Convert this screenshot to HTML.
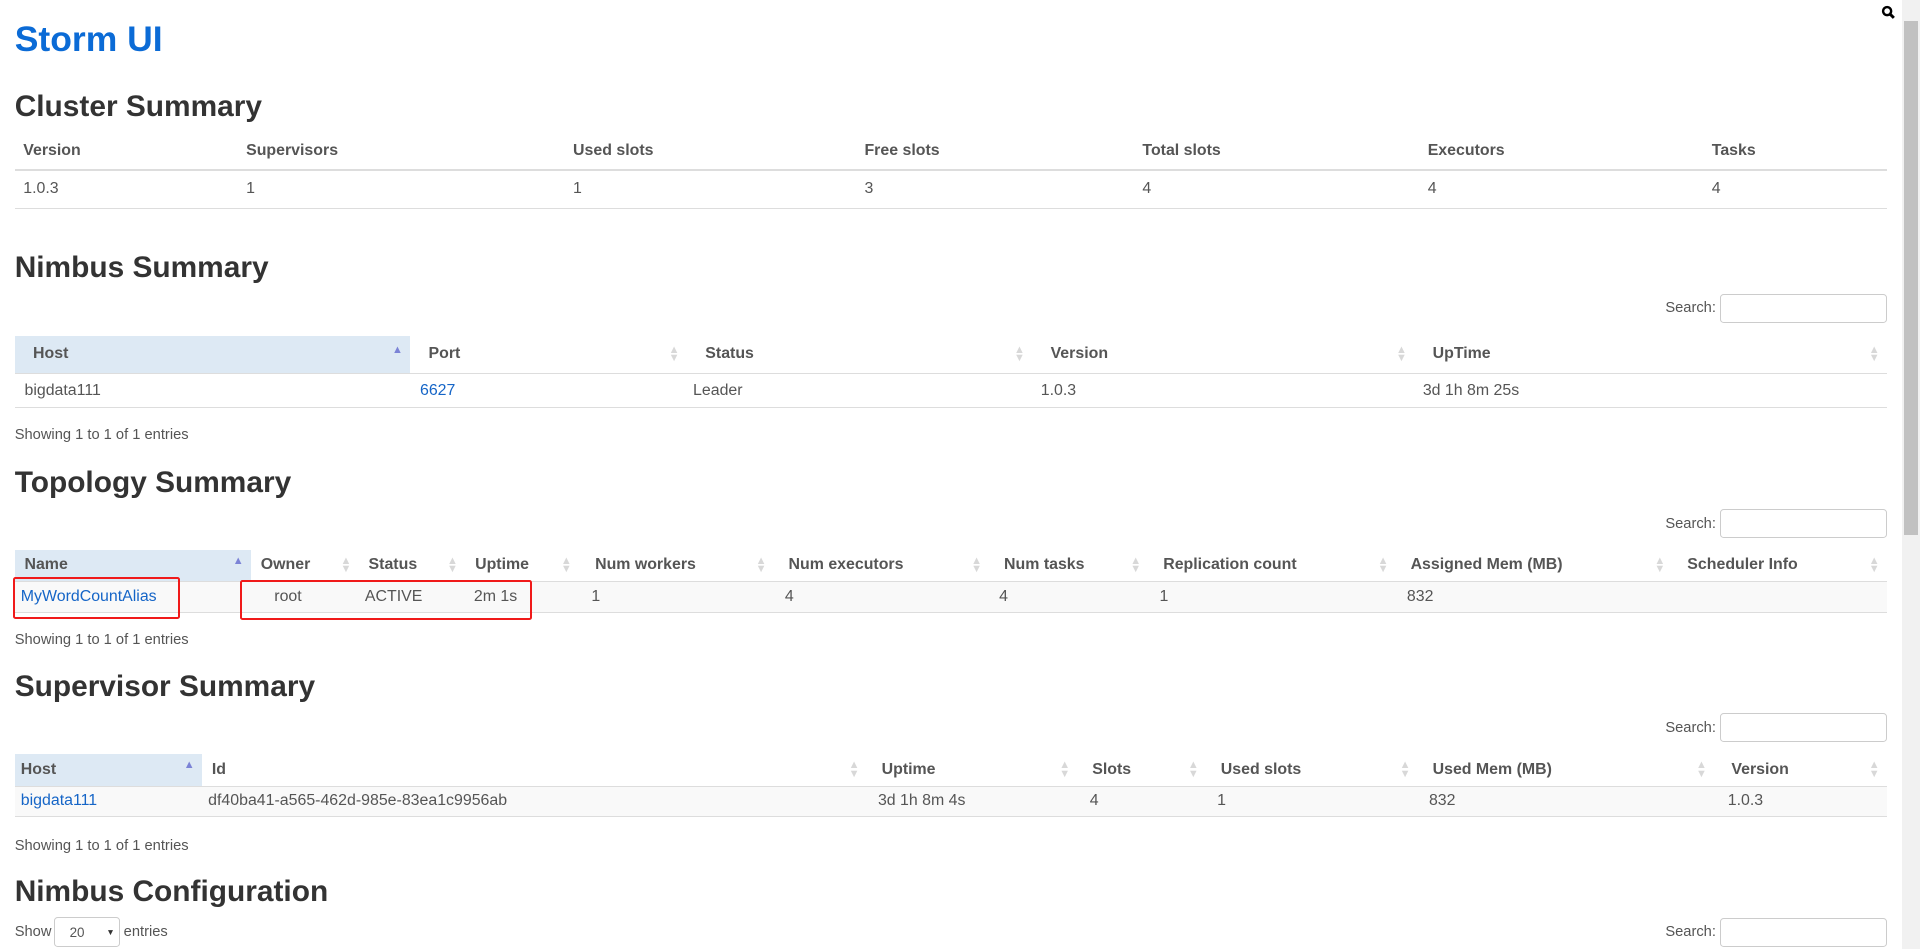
<!DOCTYPE html>
<html><head><meta charset="utf-8"><style>
html,body{margin:0;padding:0;background:#fff;overflow:hidden}
#w{zoom:1.2245;width:1568px;height:775px;position:relative;font-family:"Liberation Sans",Arial,sans-serif;font-size:13px;color:#555}
.a{position:absolute}
h1{position:absolute;left:12px;margin:0;font-size:29px;color:#0b6bd6;font-weight:bold;line-height:30px}
h2{position:absolute;left:12px;margin:0;font-size:24.4px;color:#333;font-weight:bold;line-height:26px}
table{position:absolute;left:12px;width:1529px;border-collapse:collapse;table-layout:fixed}
th{text-align:left;font-weight:bold;color:#555;padding:0 0 0 15px;position:relative;border-bottom:1px solid #ddd}
td{padding:0 0 0 8px;white-space:nowrap;border-bottom:1px solid #ddd}
th.s{background:#dde9f4}
th .i{position:absolute;right:6px;top:50%;margin-top:-7px;font-size:9px;line-height:7px;color:#d8d8d8}
th.s .i{color:#7b83d6}
a{color:#1565c7;text-decoration:none}
.sh{font-size:12px;position:absolute;left:12px}
.sl{position:absolute;left:1360px;font-size:12px}
.sb{position:absolute;left:1405px;width:134px;height:22px;border:1px solid #ccc;border-radius:3px}
.rb{position:absolute;border:2px solid #f01a1a;border-radius:2px}
tr.st td{background:#f9f9f9}
</style></head><body><div id="w">
<h1 style="top:17px">Storm UI</h1>
<svg class="a" style="left:1536px;top:4px" width="12" height="12" viewBox="0 0 12 12"><circle cx="5" cy="5" r="3.3" fill="none" stroke="#000" stroke-width="2"/><path d="M7.3 7.3L10.5 10.5" stroke="#000" stroke-width="2.4"/></svg>
<div class="a" style="left:1553px;top:0;width:15px;height:775px;background:#f1f1f1"></div>
<div class="a" style="left:1555px;top:17px;width:11px;height:420px;background:#c1c1c1"></div>

<h2 style="top:74px">Cluster Summary</h2>
<table style="top:108px"><colgroup><col style="width:181px"><col style="width:267px"><col style="width:238px"><col style="width:227px"><col style="width:233px"><col style="width:232px"><col></colgroup>
<tr style="height:31px"><th style="padding-left:7px;border-bottom:2px solid #ddd">Version</th><th style="padding-left:8px;border-bottom:2px solid #ddd">Supervisors</th><th style="padding-left:8px;border-bottom:2px solid #ddd">Used slots</th><th style="padding-left:8px;border-bottom:2px solid #ddd">Free slots</th><th style="padding-left:8px;border-bottom:2px solid #ddd">Total slots</th><th style="padding-left:8px;border-bottom:2px solid #ddd">Executors</th><th style="padding-left:8px;border-bottom:2px solid #ddd">Tasks</th></tr>
<tr style="height:31px"><td style="padding-left:7px">1.0.3</td><td>1</td><td>1</td><td>3</td><td>4</td><td>4</td><td>4</td></tr></table>

<h2 style="top:206px">Nimbus Summary</h2>
<div class="sl" style="top:245px">Search:</div><div class="sb" style="top:240px"></div>
<table style="top:274px"><colgroup><col style="width:323px"><col style="width:226px"><col style="width:282px"><col style="width:312px"><col></colgroup>
<tr style="height:31px"><th class="s">Host<span class="i">▲</span></th><th>Port<span class="i">▲<br>▼</span></th><th>Status<span class="i">▲<br>▼</span></th><th>Version<span class="i">▲<br>▼</span></th><th>UpTime<span class="i">▲<br>▼</span></th></tr>
<tr style="height:28px"><td>bigdata111</td><td><a>6627</a></td><td style="padding-left:5px">Leader</td><td style="padding-left:7px">1.0.3</td><td style="padding-left:7px">3d 1h 8m 25s</td></tr></table>
<div class="sh" style="top:349px">Showing 1 to 1 of 1 entries</div>

<h2 style="top:381px">Topology Summary</h2>
<div class="sl" style="top:421px">Search:</div><div class="sb" style="top:416px"></div>
<table style="top:449px"><colgroup><col style="width:193px"><col style="width:88px"><col style="width:87px"><col style="width:93px"><col style="width:159px"><col style="width:176px"><col style="width:130px"><col style="width:202px"><col style="width:226px"><col></colgroup>
<tr style="height:26px"><th class="s" style="padding-left:8px">Name<span class="i">▲</span></th><th style="padding-left:8px">Owner<span class="i">▲<br>▼</span></th><th style="padding-left:8px">Status<span class="i">▲<br>▼</span></th><th style="padding-left:8px">Uptime<span class="i">▲<br>▼</span></th><th style="padding-left:13px">Num workers<span class="i">▲<br>▼</span></th><th style="padding-left:12px">Num executors<span class="i">▲<br>▼</span></th><th style="padding-left:12px">Num tasks<span class="i">▲<br>▼</span></th><th style="padding-left:12px">Replication count<span class="i">▲<br>▼</span></th><th style="padding-left:12px">Assigned Mem (MB)<span class="i">▲<br>▼</span></th><th style="padding-left:12px">Scheduler Info<span class="i">▲<br>▼</span></th></tr>
<tr class="st" style="height:25px"><td style="padding-left:5px"><a>MyWordCountAlias</a></td><td style="padding-left:19px">root</td><td style="padding-left:5px">ACTIVE</td><td style="padding-left:7px">2m 1s</td><td style="padding-left:10px">1</td><td style="padding-left:9px">4</td><td style="padding-left:8px">4</td><td style="padding-left:9px">1</td><td style="padding-left:9px">832</td><td></td></tr></table>
<div class="rb" style="left:11px;top:471px;width:133px;height:31px"></div>
<div class="rb" style="left:196px;top:474px;width:235px;height:29px"></div>
<div class="sh" style="top:516px">Showing 1 to 1 of 1 entries</div>

<h2 style="top:548px">Supervisor Summary</h2>
<div class="sl" style="top:588px">Search:</div><div class="sb" style="top:582px"></div>
<table style="top:616px"><colgroup><col style="width:153px"><col style="width:543px"><col style="width:172px"><col style="width:105px"><col style="width:173px"><col style="width:242px"><col></colgroup>
<tr style="height:26px"><th class="s" style="padding-left:5px">Host<span class="i">▲</span></th><th style="padding-left:8px">Id<span class="i">▲<br>▼</span></th><th style="padding-left:12px">Uptime<span class="i">▲<br>▼</span></th><th style="padding-left:12px">Slots<span class="i">▲<br>▼</span></th><th style="padding-left:12px">Used slots<span class="i">▲<br>▼</span></th><th style="padding-left:12px">Used Mem (MB)<span class="i">▲<br>▼</span></th><th style="padding-left:14px">Version<span class="i">▲<br>▼</span></th></tr>
<tr class="st" style="height:25px"><td style="padding-left:5px"><a>bigdata111</a></td><td style="padding-left:5px">df40ba41-a565-462d-985e-83ea1c9956ab</td><td style="padding-left:9px">3d 1h 8m 4s</td><td style="padding-left:10px">4</td><td style="padding-left:9px">1</td><td style="padding-left:9px">832</td><td style="padding-left:11px">1.0.3</td></tr></table>
<div class="sh" style="top:684px">Showing 1 to 1 of 1 entries</div>

<h2 style="top:715px">Nimbus Configuration</h2>
<div class="a" style="left:12px;top:755px;font-size:12px">Show</div>
<div class="a" style="left:44px;top:749px;width:52px;height:23px;border:1px solid #ccc;border-radius:3px;font-size:11px"><span style="position:absolute;left:12px;top:6px">20</span><span style="position:absolute;left:42px;top:7px;font-size:7px;color:#333">▼</span></div>
<div class="a" style="left:101px;top:755px;font-size:12px">entries</div>
<div class="sl" style="top:755px">Search:</div><div class="sb" style="top:750px"></div>
</div></body></html>
